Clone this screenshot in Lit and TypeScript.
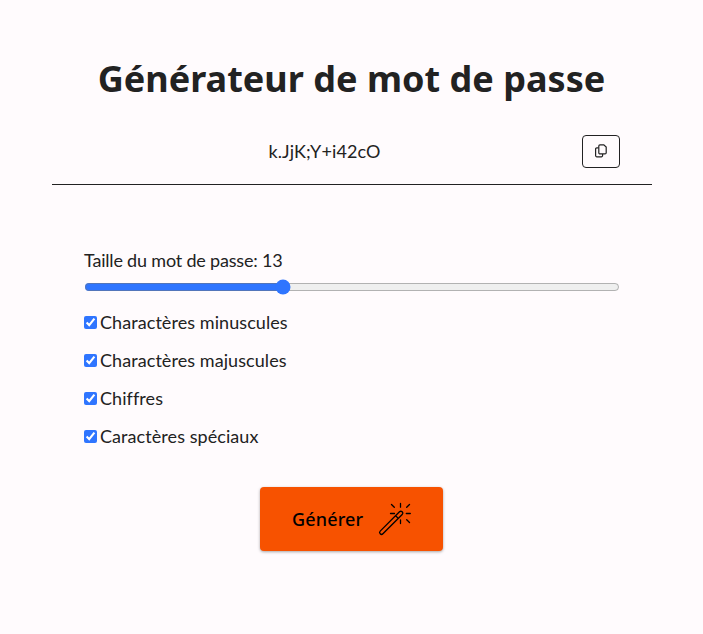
import { LitElement, html, css } from "lit";
import { customElement, state } from "lit/decorators.js";

@customElement("app-root")
class AppRoot extends LitElement {
  @state() size = 13;

  static styles = css`
    :host { display: block; box-sizing: border-box; height: 634px; background: #fffbfd; color: #222;
      font-family: Lato, sans-serif; font-size: 18px; line-height: 22px; overflow: hidden; }
    main { width: 600px; margin: 0 0 0 52px; display: flex; flex-direction: column; }
    h1 { margin: 54px 0 0; padding-right: 1px; font: 700 36px/50px "Noto Sans", sans-serif;
      letter-spacing: 0.02px; text-align: center; white-space: nowrap; }
    .result { display: flex; align-items: center; box-sizing: border-box; height: 66px; margin-top: 15px;
      padding: 0 32px; border-bottom: 1px solid #222; }
    .password { flex: 1; text-align: center; padding: 0 17px 2px 0; letter-spacing: 0.1px; }
    .copy { display: grid; place-items: center; box-sizing: border-box; width: 38px; height: 33px;
      padding: 0; margin-top: -1px; border: 1px solid #222; border-radius: 4px; background: #fffbfd; color: #222; }
    .settings { display: flex; flex-direction: column; padding: 64px 32px 0; }
    .size { letter-spacing: -0.19px; }
    .range { display: block; margin: 8px 0 0; width: 536px; height: 16px; accent-color: #2f75ff; }
    .options { display: flex; flex-direction: column; gap: 16px; margin-top: 16px; }
    .option { display: flex; align-items: center; gap: 3px; letter-spacing: 0.07px; }
    .check { width: 13px; height: 13px; margin: 0; accent-color: #2f75ff; }
    .generate { display: flex; align-items: center; justify-content: space-between; box-sizing: border-box;
      align-self: center; width: 183px; height: 64px; margin: 40px 1px 0 0; padding: 0 32px; border: 0;
      border-radius: 4px; background: #f75200; color: #000; font: 500 18px/24px "Noto Sans", sans-serif;
      letter-spacing: 0.15px; white-space: nowrap; box-shadow: 0 1px 3px rgba(0, 0, 0, 0.35); }
    svg { display: block; flex: none; overflow: visible; }
  `;

  render() {
    const options = ["Charactères minuscules", "Charactères majuscules", "Chiffres", "Caractères spéciaux"];
    return html`
      <main>
        <h1>Générateur de mot de passe</h1>
        <div class="result">
          <span class="password">k.JjK;Y+i42cO</span>
          <button class="copy" aria-label="Copier">
            <svg width="14" height="14" viewBox="0 0 14 14" fill="none" stroke="currentColor" stroke-width="1.2">
              <path d="M6 .8h3.8l2.4 2.3v5.6a1.2 1.2 0 0 1-1.2 1.2H6a1.2 1.2 0 0 1-1.2-1.2V2A1.2 1.2 0 0 1 6 .8Z" />
              <path d="M4.6 3.8H2.8A1.2 1.2 0 0 0 1.6 5v6.6a1.2 1.2 0 0 0 1.2 1.2h4.6a1.2 1.2 0 0 0 1.2-1.2V10" />
            </svg>
          </button>
        </div>
        <div class="settings">
          <label class="size" for="size">Taille du mot de passe: ${this.size}</label>
          <input id="size" class="range" type="range" min="2" max="32" .value=${String(this.size)}
            @input=${(e: Event) => (this.size = Number((e.target as HTMLInputElement).value))} />
          <div class="options">
            ${options.map((o) => html`<label class="option"><input class="check" type="checkbox" checked />${o}</label>`)}
          </div>
        </div>
        <button class="generate">
          <span>Générer</span>
          <svg width="32" height="32" viewBox="0 0 32 32" fill="none" stroke="currentColor" stroke-width="1.3" stroke-linecap="round">
            <path d="M1.2 28.1 20.5 8.8a1.9 1.9 0 0 1 2.7 2.7L3.9 30.8a1.9 1.9 0 0 1-2.7-2.7ZM16.6 12.7l2.7 2.7" />
            <path d="M21.5.5v3.7M21.5 17v3.5M11.5 10.5h4M27.3 10.5h4M12.5 1.5l2.8 2.8M30.5 1.5l-2.8 2.8M27.7 16.7l2.8 2.8" />
          </svg>
        </button>
      </main>
    `;
  }
}
